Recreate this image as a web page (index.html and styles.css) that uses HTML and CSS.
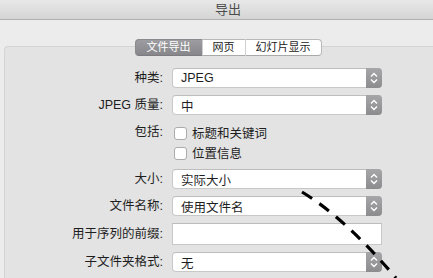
FILE: index.html
```html
<!DOCTYPE html>
<html lang="zh">
<head>
<meta charset="utf-8">
<title>导出</title>
<link rel="stylesheet" href="styles.css">
</head>
<body>
<div class="window">
  <header class="titlebar">导出</header>
  <main class="panel">
    <nav class="tabs">
      <span class="tab active">文件导出</span>
      <span class="tab">网页</span>
      <span class="tab">幻灯片显示</span>
    </nav>
    <section class="box">
      <div class="form">
        <div class="label">种类:</div>
        <div class="popup"><span>JPEG</span><span class="stepper"><svg viewBox="0 0 16 20" width="16" height="20"><path d="M5 8.5L8 5.5L11 8.5M5 11.5L8 14.5L11 11.5"/></svg></span></div>

        <div class="label">JPEG 质量:</div>
        <div class="popup"><span>中</span><span class="stepper"><svg viewBox="0 0 16 20" width="16" height="20"><path d="M5 8.5L8 5.5L11 8.5M5 11.5L8 14.5L11 11.5"/></svg></span></div>

        <div class="label">包括:</div>
        <div class="checks">
          <div class="check"><span class="box-cb"></span>标题和关键词</div>
          <div class="check"><span class="box-cb"></span>位置信息</div>
        </div>

        <div class="label">大小:</div>
        <div class="popup"><span>实际大小</span><span class="stepper"><svg viewBox="0 0 16 20" width="16" height="20"><path d="M5 8.5L8 5.5L11 8.5M5 11.5L8 14.5L11 11.5"/></svg></span></div>

        <div class="label">文件名称:</div>
        <div class="popup"><span>使用文件名</span><span class="stepper"><svg viewBox="0 0 16 20" width="16" height="20"><path d="M5 8.5L8 5.5L11 8.5M5 11.5L8 14.5L11 11.5"/></svg></span></div>

        <div class="label tall">用于序列的前缀:</div>
        <div class="textfield"></div>

        <div class="label">子文件夹格式:</div>
        <div class="popup"><span>无</span><span class="stepper"><svg viewBox="0 0 16 20" width="16" height="20"><path d="M5 8.5L8 5.5L11 8.5M5 11.5L8 14.5L11 11.5"/></svg></span></div>
      </div>
    </section>
  </main>
  <svg class="annot" viewBox="0 0 433 278" width="433" height="278">
    <path d="M302 192Q345 218 396 278"/>
  </svg>
</div>
</body>
</html>
```
FILE: styles.css
```css
html, body {
  margin: 0;
  padding: 0;
}
body {
  width: 433px;
  height: 278px;
  overflow: hidden;
  background: #ececec;
}
.window {
  position: relative;
  width: 433px;
  height: 278px;
  overflow: hidden;
  font-family: "Liberation Sans", "Noto Sans CJK SC", sans-serif;
  font-size: 12.5px;
  color: #1e1e1e;
}
.titlebar {
  height: 19px;
  line-height: 19px;
  padding-left: 23px;
  border-bottom: 1px solid #b0b0b0;
  background: linear-gradient(#e8e8e8, #d5d5d5);
  text-align: center;
  font-size: 13px;
  color: #4b4b4b;
}
.panel {
  padding-top: 19px;
  background: #ececec;
}
.tabs {
  position: relative;
  z-index: 1;
  display: flex;
  justify-content: center;
  padding-left: 23px;
}
.tabs .tab {
  height: 15px;
  line-height: 15px;
  padding: 0 10px;
  font-size: 11px;
  background: #fff;
  color: #1a1a1a;
  border-top: 1px solid #b8b8b8;
  border-bottom: 1px solid #a9a9a9;
  border-left: 1px solid #cfcfcf;
}
.tabs .tab:first-child {
  border-left: 1px solid #8a8a8e;
  border-radius: 4px 0 0 4px;
}
.tabs .tab:last-child {
  border-right: 1px solid #b8b8b8;
  border-radius: 0 4px 4px 0;
}
.tabs .tab.active {
  background: linear-gradient(#9d9da1, #87878b);
  color: #fff;
  border-top-color: #8a8a8e;
  border-bottom-color: #7c7c80;
  padding: 0 11px;
}
.box {
  margin: -10px 0 0 4px;
  height: 242px;
  background: #e3e3e3;
  border: 1px solid #d4d4d4;
  border-right: none;
  border-bottom: none;
  border-radius: 4px 0 0 0;
  padding-top: 21px;
  box-sizing: border-box;
}
.form {
  display: grid;
  grid-template-columns: 158px 210px;
  column-gap: 9px;
  row-gap: 7px;
  align-items: start;
}
.label {
  text-align: right;
  line-height: 20px;
  white-space: nowrap;
}
.label.tall {
  line-height: 22px;
}
.popup {
  display: flex;
  align-items: center;
  height: 20px;
  box-sizing: border-box;
  background: #fff;
  border: 1px solid #c8c8c8;
  border-top-color: #bdbdbd;
  border-radius: 4px;
  padding-left: 8px;
}
.stepper {
  align-self: stretch;
  margin: -1px -1px -1px auto;
  width: 16px;
  border-radius: 0 4px 4px 0;
  background: linear-gradient(#a6a6a8, #8c8c8f);
  display: flex;
  align-items: center;
  justify-content: center;
}
.stepper svg {
  display: block;
}
.stepper path {
  fill: none;
  stroke: #fff;
  stroke-width: 1.4;
}
.checks {
  display: flex;
  flex-direction: column;
}
.check {
  display: flex;
  align-items: center;
  height: 20px;
  padding-left: 2px;
}
.box-cb {
  width: 13px;
  height: 13px;
  box-sizing: border-box;
  background: #fff;
  border: 1px solid #ababab;
  border-radius: 3px;
  margin-right: 5px;
  margin-top: 2px;
}
.textfield {
  height: 22px;
  box-sizing: border-box;
  background: #fff;
  border: 1px solid #c8c8c8;
  border-top-color: #bcbcbc;
}
.annot {
  position: absolute;
  left: 0;
  top: 0;
  pointer-events: none;
}
.annot path {
  fill: none;
  stroke: #000;
  stroke-width: 3.2;
  stroke-dasharray: 12 9;
}
```
